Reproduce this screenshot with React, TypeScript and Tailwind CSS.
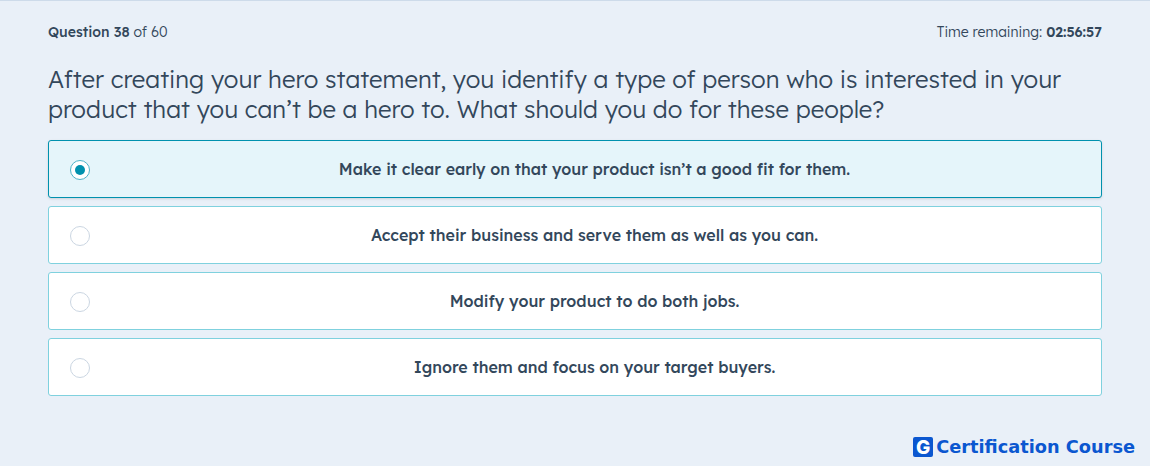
const options = [
  { text: "Make it clear early on that your product isn’t a good fit for them.", selected: true },
  { text: "Accept their business and serve them as well as you can.", selected: false },
  { text: "Modify your product to do both jobs.", selected: false },
  { text: "Ignore them and focus on your target buyers.", selected: false },
];

export default function App() {
  return (
    <div className="w-[1150px] h-[466px] overflow-hidden bg-[#e9f0f8] border-t border-[#cddbea] px-12 font-['Lexend','Inter','Noto_Sans',sans-serif] font-light text-[#33475b] flex flex-col relative">
      <div className="flex justify-between items-center h-[16px] mt-[23px] text-sm">
        <div><span className="font-medium">Question 38</span> of 60</div>
        <div>Time remaining: <span className="font-semibold">02:56:57</span></div>
      </div>
      <h1 className="text-2xl leading-[30px] mt-[24px]">
        After creating your hero statement, you identify a type of person who is interested in your product that you can’t be a hero to. What should you do for these people?
      </h1>
      <div className="flex flex-col gap-2 mt-4">
        {options.map((o) => (
          <div
            key={o.text}
            className={`relative h-[58px] pl-[39px] rounded-[3px] border flex items-center justify-center font-medium text-base ${o.selected ? "bg-[#e5f5fa] border-[#0091ae] shadow-sm" : "bg-white border-[#7fd1de]"}`}
          >
            <span
              className={`absolute left-[21px] top-[19px] w-5 h-5 rounded-full border flex items-center justify-center ${o.selected ? "border-[#4fb3c8] bg-white" : "border-[#cbd6e2] bg-white"}`}
            >
              {o.selected && <span className="w-[10px] h-[10px] rounded-full bg-[#0091ae]" />}
            </span>
            {o.text}
          </div>
        ))}
      </div>
      <div className="absolute right-[15px] bottom-[9px] flex items-center gap-[3px] text-[#0b57d0] font-bold text-[17.75px] leading-5 font-['DejaVu_Sans',sans-serif]">
        <span className="w-5 h-5 rounded-[2px] bg-[#0b57d0] text-white flex items-center justify-center text-[19px] leading-none font-['Inter',sans-serif] font-extrabold">G</span>
        Certification Course
      </div>
    </div>
  );
}
